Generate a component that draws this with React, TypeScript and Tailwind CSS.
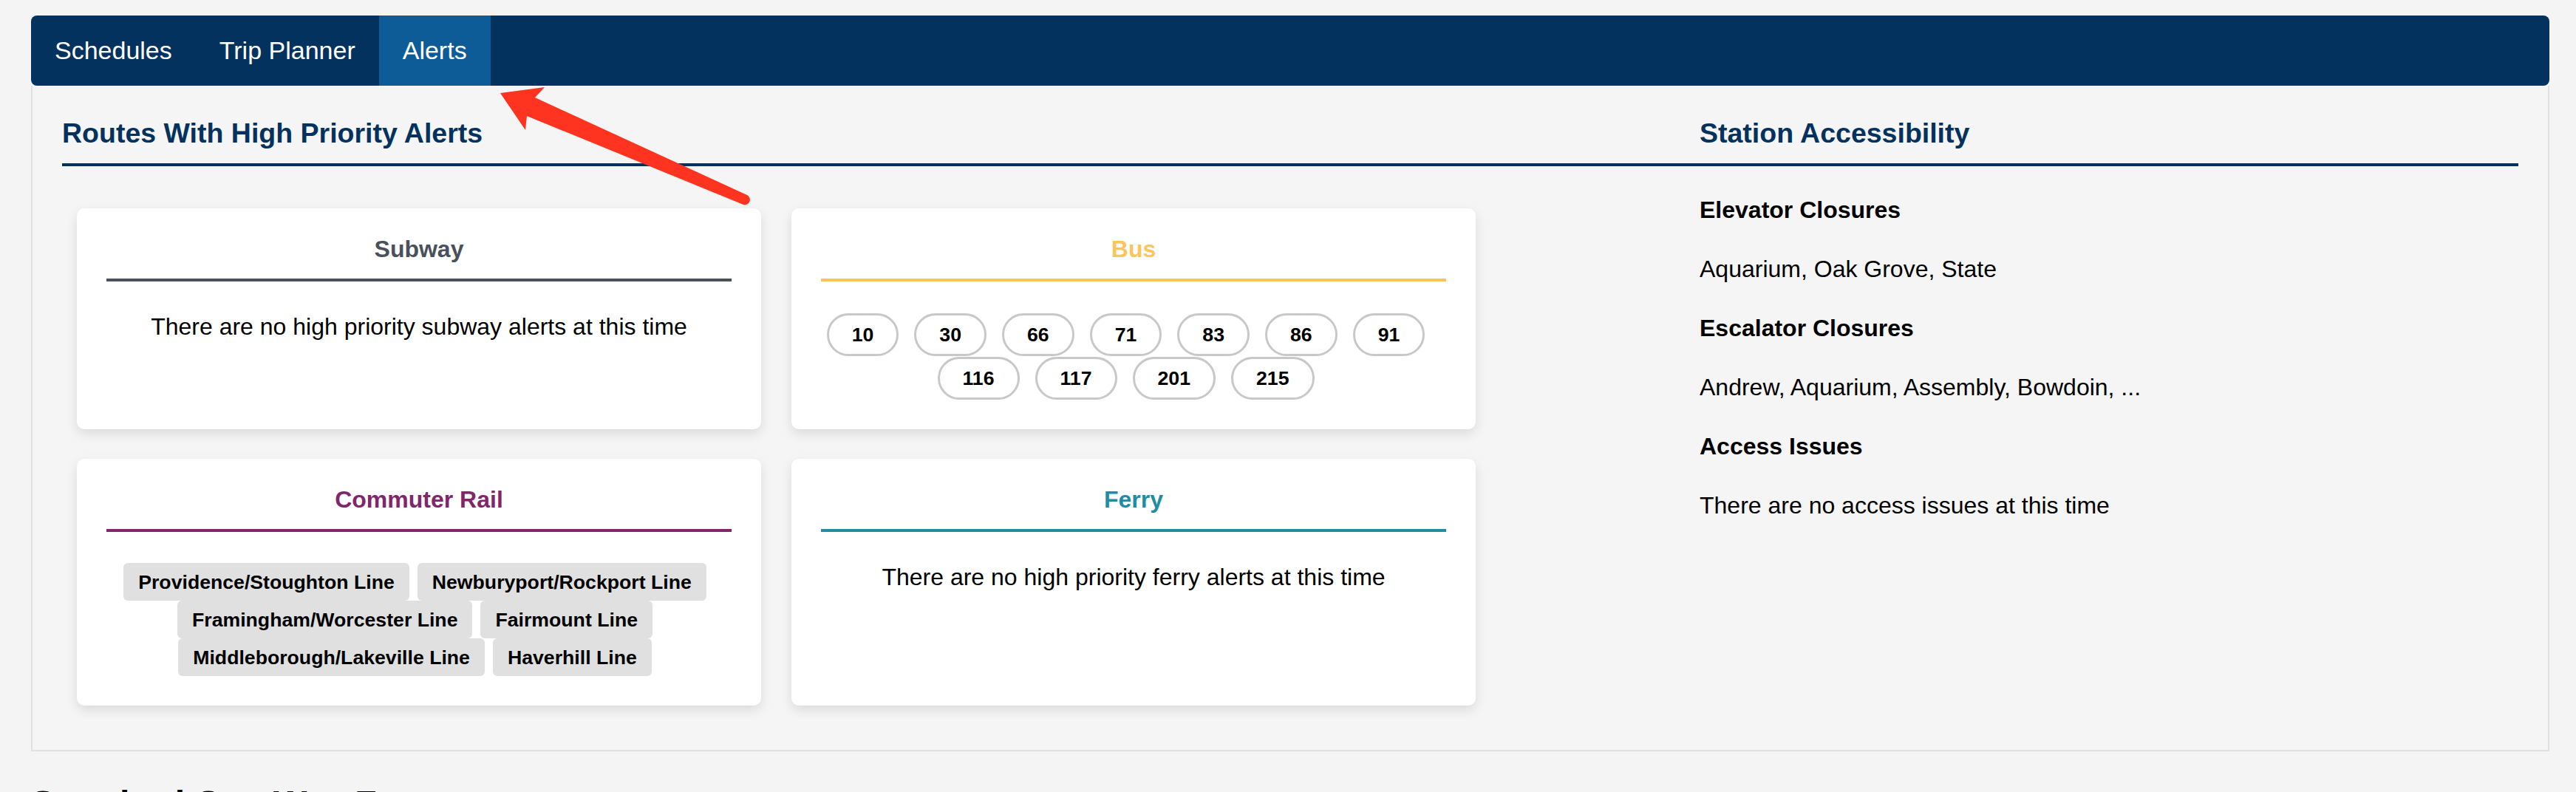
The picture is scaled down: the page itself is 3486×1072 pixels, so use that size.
import type { ReactNode } from 'react';

const busRoutes = ['10', '30', '66', '71', '83', '86', '91', '116', '117', '201', '215'];

const railLines = [
  'Providence/Stoughton Line',
  'Newburyport/Rockport Line',
  'Framingham/Worcester Line',
  'Fairmount Line',
  'Middleborough/Lakeville Line',
  'Haverhill Line',
];

function ModeCard({ title, accent, children }: { title: string; accent: string; children: ReactNode }) {
  return (
    <div className="bg-white rounded-[10px] shadow-[0_6px_16px_rgba(0,0,0,0.11)] pt-[37px] px-[40px] pb-[40px]">
      <h3 className={`text-[32px] leading-[37px] font-bold text-center pb-[21px] border-b-4 ${accent}`}>{title}</h3>
      {children}
    </div>
  );
}

function EmptyNote({ children }: { children: ReactNode }) {
  return <p className="mt-[43px] text-center text-[32px] leading-[37px]">{children}</p>;
}

export default function App() {
  return (
    <div className="relative min-h-screen bg-[#f4f4f4] text-black font-['Liberation_Sans',Arial,sans-serif]">
      <div className="pt-[21px] pl-[42px] pr-[36px]">
        {/* Top tabs */}
        <nav className="h-[95px] bg-[#04325f] rounded-[8px] flex text-white text-[34px]">
          <a className="px-[32px] flex items-center">Schedules</a>
          <a className="px-[32px] flex items-center">Trip Planner</a>
          <a className="px-[32px] flex items-center bg-[#0d5c97]">Alerts</a>
        </nav>

        {/* Alerts panel */}
        <main className="bg-[#f5f5f5] border-x-2 border-b-2 border-[#e0e0e0] pt-[43px] px-[40px] pb-[60px]">
          <div className="grid grid-cols-3">
            <section className="col-span-2">
              <h2 className="text-[37.5px] leading-[43px] font-bold text-[#04325f] pb-[19px] border-b-4 border-[#04325f]">
                Routes With High Priority Alerts
              </h2>
              <div className="mt-[57px] pl-[20px] grid grid-cols-[926px_926px] gap-x-[41px] gap-y-[40px]">
                <ModeCard title="Subway" accent="text-[#4a505c] border-[#4a505c]">
                  <EmptyNote>There are no high priority subway alerts at this time</EmptyNote>
                </ModeCard>
                <ModeCard title="Bus" accent="text-[#fbc55b] border-[#fbc55b]">
                  <div className="mt-[43px] flex flex-wrap justify-center gap-y-[1px]">
                    {busRoutes.map((r) => (
                      <span
                        key={r}
                        className="h-[58px] px-[31px] mr-[21px] flex items-center bg-white border-[3px] border-[#c8c8c8] rounded-full font-bold text-[26.67px]"
                      >
                        {r}
                      </span>
                    ))}
                  </div>
                </ModeCard>
                <ModeCard title="Commuter Rail" accent="text-[#80276c] border-[#80276c]">
                  <div className="mt-[42px] flex flex-wrap justify-center">
                    {railLines.map((l) => (
                      <span
                        key={l}
                        className="h-[51px] px-[20px] mr-[11px] flex items-center bg-[#e0e0e0] rounded-[6px] font-bold text-[26.67px]"
                      >
                        {l}
                      </span>
                    ))}
                  </div>
                </ModeCard>
                <ModeCard title="Ferry" accent="text-[#218da4] border-[#218da4]">
                  <EmptyNote>There are no high priority ferry alerts at this time</EmptyNote>
                </ModeCard>
              </div>
            </section>

            <section>
              <h2 className="text-[37.5px] leading-[43px] font-bold text-[#04325f] pb-[19px] border-b-4 border-[#04325f]">
                Station Accessibility
              </h2>
              <div className="mt-[41px] flex flex-col gap-[43px] text-[32px] leading-[37px]">
                <h4 className="font-bold">Elevator Closures</h4>
                <p>Aquarium, Oak Grove, State</p>
                <h4 className="font-bold">Escalator Closures</h4>
                <p>Andrew, Aquarium, Assembly, Bowdoin, ...</p>
                <h4 className="font-bold">Access Issues</h4>
                <p>There are no access issues at this time</p>
              </div>
            </section>
          </div>
        </main>

        <h2 className="mt-[35px] text-[48px] font-bold">Standard One Way Fares</h2>
        <div className="h-[300px]" />
      </div>

      {/* annotation arrow */}
      <svg className="absolute left-0 top-0 pointer-events-none" width="1100" height="320" viewBox="0 0 1100 320">
        <path
          d="M677 126 L737 118 L724 132 L1011 264 A7 7 0 0 1 1006 277 L713 157 L711 176 Z"
          fill="#fe3320"
        />
      </svg>
    </div>
  );
}
